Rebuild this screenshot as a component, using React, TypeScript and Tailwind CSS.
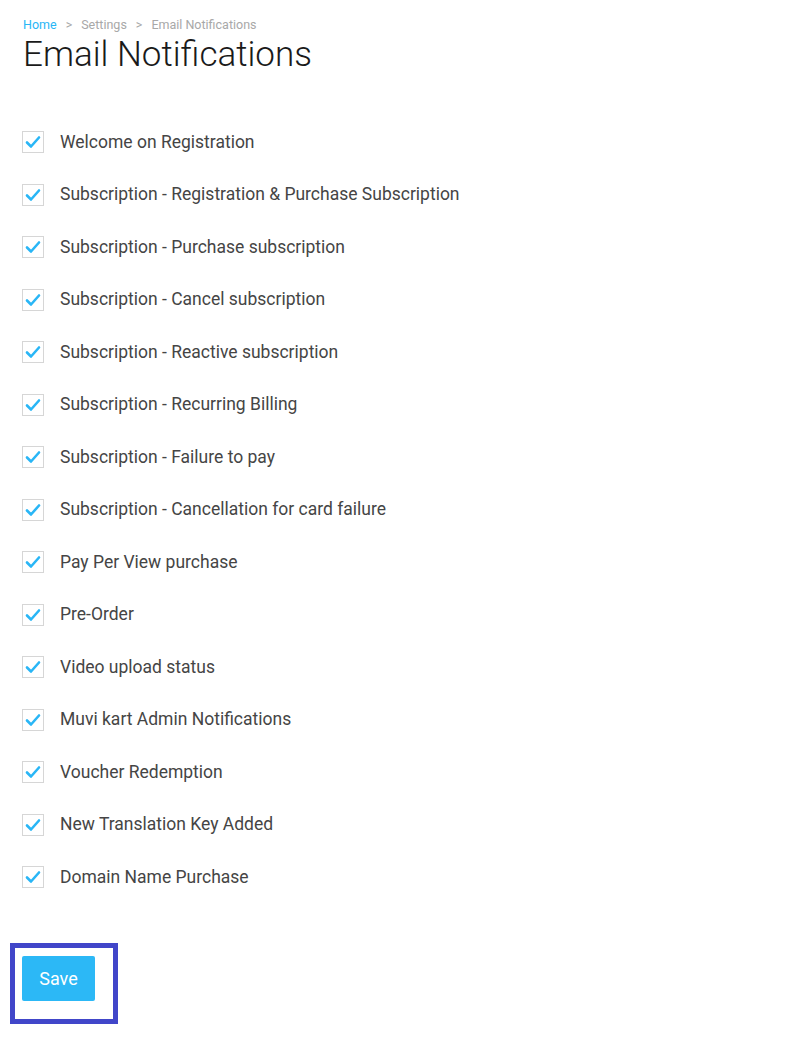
const items = [
  "Welcome on Registration",
  "Subscription - Registration & Purchase Subscription",
  "Subscription - Purchase subscription",
  "Subscription - Cancel subscription",
  "Subscription - Reactive subscription",
  "Subscription - Recurring Billing",
  "Subscription - Failure to pay",
  "Subscription - Cancellation for card failure",
  "Pay Per View purchase",
  "Pre-Order",
  "Video upload status",
  "Muvi kart Admin Notifications",
  "Voucher Redemption",
  "New Translation Key Added",
  "Domain Name Purchase",
]

function CheckBox() {
  return (
    <span className="flex items-center justify-center w-[22px] h-[22px] border border-[#d6d6d6] bg-white shrink-0">
      <svg width="16" height="14" viewBox="0 0 16 14" fill="none">
        <path d="M2 7.5 L6 11.5 L14 2.5" stroke="#29b6f6" strokeWidth="2.6" strokeLinecap="round" strokeLinejoin="round" />
      </svg>
    </span>
  )
}

export default function App() {
  return (
    <div className="min-h-[1039px] bg-white font-['Roboto',sans-serif]">
      <div className="pl-[23px] pt-[16px]">
        <nav className="flex items-center gap-[9px] text-[12.5px] leading-[17px] text-[#a8a8a8]">
          <span className="text-[#29b6f6]">Home</span>
          <span>&gt;</span>
          <span>Settings</span>
          <span>&gt;</span>
          <span>Email Notifications</span>
        </nav>
        <h1 className="mt-[2px] text-[35px] leading-[40px] font-light text-[#1a1a1a]">Email Notifications</h1>
      </div>

      <ul className="mt-[56px] pl-[22px] flex flex-col gap-[30.5px]">
        {items.map((label) => (
          <li key={label} className="flex items-center gap-[16px] h-[22px]">
            <CheckBox />
            <span className="text-[17.5px] text-[#454545]">{label}</span>
          </li>
        ))}
      </ul>

      <div className="mt-[55px] ml-[10px] w-[108px] h-[81px] border-[5px] border-[#4146c9] pl-[7px] pt-[8px]">
        <button
          type="button"
          className="w-[73px] h-[45px] rounded-[2px] bg-[#2cb8f6] text-white text-[18px]"
        >
          Save
        </button>
      </div>
    </div>
  )
}
